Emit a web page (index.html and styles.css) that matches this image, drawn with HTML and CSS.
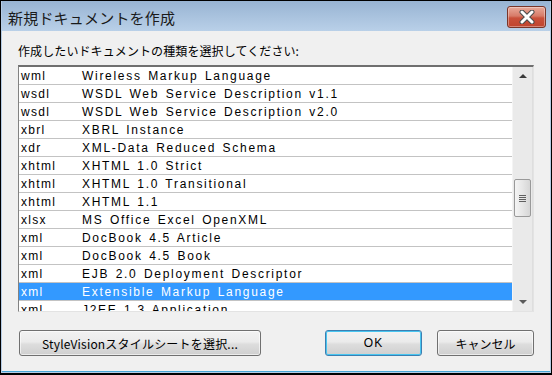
FILE: index.html
```html
<!DOCTYPE html>
<html lang="ja">
<head>
    <meta charset="UTF-8">
    <title>新規ドキュメントを作成</title>
    <link rel="stylesheet" href="styles.css">
</head>
<body>
    <div class="window">
        <div class="titlebar">
            <span class="title">新規ドキュメントを作成</span>
            <button class="close-btn" title="閉じる">
                <svg width="18" height="14" viewBox="0 0 18 14">
                    <path d="M4 2 L14 12 M14 2 L4 12" stroke="#4a4a4a" stroke-width="5" stroke-linecap="round"/>
                    <path d="M4 2 L14 12 M14 2 L4 12" stroke="#ffffff" stroke-width="3" stroke-linecap="round"/>
                </svg>
            </button>
        </div>
        <div class="client">
            <p class="label">作成したいドキュメントの種類を選択してください:</p>
            <div class="listbox">
                <ul class="rows">
                    <li><span class="ext">wml</span><span class="desc">Wireless Markup Language</span></li>
                    <li><span class="ext">wsdl</span><span class="desc">WSDL Web Service Description v1.1</span></li>
                    <li><span class="ext">wsdl</span><span class="desc">WSDL Web Service Description v2.0</span></li>
                    <li><span class="ext">xbrl</span><span class="desc">XBRL Instance</span></li>
                    <li><span class="ext">xdr</span><span class="desc">XML-Data Reduced Schema</span></li>
                    <li><span class="ext">xhtml</span><span class="desc">XHTML 1.0 Strict</span></li>
                    <li><span class="ext">xhtml</span><span class="desc">XHTML 1.0 Transitional</span></li>
                    <li><span class="ext">xhtml</span><span class="desc">XHTML 1.1</span></li>
                    <li><span class="ext">xlsx</span><span class="desc">MS Office Excel OpenXML</span></li>
                    <li><span class="ext">xml</span><span class="desc">DocBook 4.5 Article</span></li>
                    <li><span class="ext">xml</span><span class="desc">DocBook 4.5 Book</span></li>
                    <li><span class="ext">xml</span><span class="desc">EJB 2.0 Deployment Descriptor</span></li>
                    <li class="selected"><span class="ext">xml</span><span class="desc">Extensible Markup Language</span></li>
                    <li><span class="ext">xml</span><span class="desc">J2EE 1.3 Application</span></li>
                </ul>
                <div class="scrollbar">
                    <div class="arrow"><span class="tri-up"></span></div>
                    <div class="track">
                        <div class="thumb">
                            <span class="grip"></span>
                        </div>
                    </div>
                    <div class="arrow"><span class="tri-down"></span></div>
                </div>
            </div>
            <div class="buttons">
                <button class="btn btn-wide">StyleVisionスタイルシートを選択...</button>
                <span class="spacer"></span>
                <button class="btn btn-default">OK</button>
                <button class="btn">キャンセル</button>
            </div>
        </div>
    </div>
</body>
</html>
```

FILE: styles.css
```css
body {
    margin: 0;
    background: #ffffff;
    font-family: "Liberation Sans", "Noto Sans CJK JP", sans-serif;
}
.window {
    width: 552px;
    height: 375px;
    box-sizing: border-box;
    border: 1px solid #000000;
    border-bottom-width: 2px;
    padding: 0 1px 1px 1px;
    background: #b4cbe4;
    display: flex;
    flex-direction: column;
}
.titlebar {
    height: 30px;
    display: flex;
    align-items: center;
    padding: 0 4px 0 6px;
    background: linear-gradient(#98b4d3, #b9d0e8);
}
.title {
    font-family: "Noto Sans CJK JP", sans-serif;
    font-size: 15px;
    color: #1a1a1a;
    letter-spacing: 0.2px;
    margin-top: 2px;
}
.close-btn {
    margin-left: auto;
    margin-top: 2px;
    width: 39px;
    height: 22px;
    padding: 0;
    border: 1px solid #7a3528;
    border-radius: 3px;
    background: linear-gradient(#e9aa9a, #d77b68 45%, #c9503a 55%, #c0442e);
    box-shadow: inset 0 0 0 1px rgba(255, 255, 255, 0.35);
    display: flex;
    align-items: center;
    justify-content: center;
}
.client {
    flex: 1;
    background: #f0f0f0;
    padding: 0 16px 0 16px;
    border-bottom: 1px solid #47a6d6;
    display: flex;
    flex-direction: column;
}
.label {
    margin: 12px 0 0 0;
    height: 22px;
    font-family: "Noto Sans CJK JP", sans-serif;
    font-size: 12px;
    letter-spacing: 0.1px;
    color: #000000;
    line-height: 16px;
}
.listbox {
    display: flex;
    height: 247px;
    box-sizing: border-box;
    border-top: 2px solid #6f6f6f;
    border-left: 1px solid #828282;
    border-right: 1px solid #e3e3e3;
    border-bottom: 1px solid #e3e3e3;
    background: #ffffff;
    overflow: hidden;
}
.rows {
    list-style-type: none;
    margin: 0;
    padding: 0;
    flex: 1;
}
.rows li {
    height: 18px;
    box-sizing: border-box;
    padding-top: 1px;
    border-bottom: 1px solid #c3c3c3;
    display: flex;
    align-items: center;
    font-size: 12px;
    letter-spacing: 1.7px;
    word-spacing: 1.5px;
    color: #000000;
    white-space: nowrap;
}
.rows li.selected {
    background: #3399ff;
    color: #ffffff;
}
.ext {
    width: 61px;
    padding-left: 2px;
    letter-spacing: 1.3px;
}
.scrollbar {
    width: 19px;
    display: flex;
    flex-direction: column;
    background: #eaeaea;
    border-left: 1px solid #f4f4f4;
    border-right: 1px solid #dedede;
}
.arrow {
    height: 18px;
    display: flex;
    align-items: center;
    justify-content: center;
}
.tri-up {
    width: 0;
    height: 0;
    border-left: 4px solid transparent;
    border-right: 4px solid transparent;
    border-bottom: 4px solid #3a3a3a;
}
.tri-down {
    width: 0;
    height: 0;
    border-left: 4px solid transparent;
    border-right: 4px solid transparent;
    border-top: 4px solid #5a5a5a;
}
.track {
    flex: 1;
}
.thumb {
    margin: 94px 1px 0 1px;
    height: 38px;
    box-sizing: border-box;
    border: 1px solid #999999;
    border-radius: 2px;
    background: linear-gradient(to right, #f4f4f4, #e6e6e6 50%, #d6d6d6);
    display: flex;
    align-items: center;
    justify-content: center;
}
.grip {
    width: 7px;
    height: 7px;
    background: repeating-linear-gradient(#5f5f5f 0 1px, transparent 1px 2px);
}
.buttons {
    display: flex;
    align-items: center;
    margin-top: 18px;
    padding-left: 1px;
}
.spacer {
    flex: 1;
}
.btn {
    height: 26px;
    width: 97px;
    box-sizing: border-box;
    border: 1px solid #707070;
    border-radius: 3px;
    background: linear-gradient(#f2f2f2, #ebebeb 45%, #dddddd 55%, #cfcfcf);
    box-shadow: inset 0 0 0 1px rgba(255, 255, 255, 0.6);
    font-family: "Noto Sans CJK JP", sans-serif;
    font-size: 12px;
    color: #000000;
    padding: 0;
    margin-left: 15px;
}
.btn-wide {
    width: 242px;
    margin-left: 0;
    letter-spacing: 0.2px;
}
.btn-default {
    border-color: #3c7fb1;
    box-shadow: inset 0 0 0 1px #48c5f0;
    margin-left: 0;
    font-family: "Liberation Sans", sans-serif;
    letter-spacing: 1px;
}
```
